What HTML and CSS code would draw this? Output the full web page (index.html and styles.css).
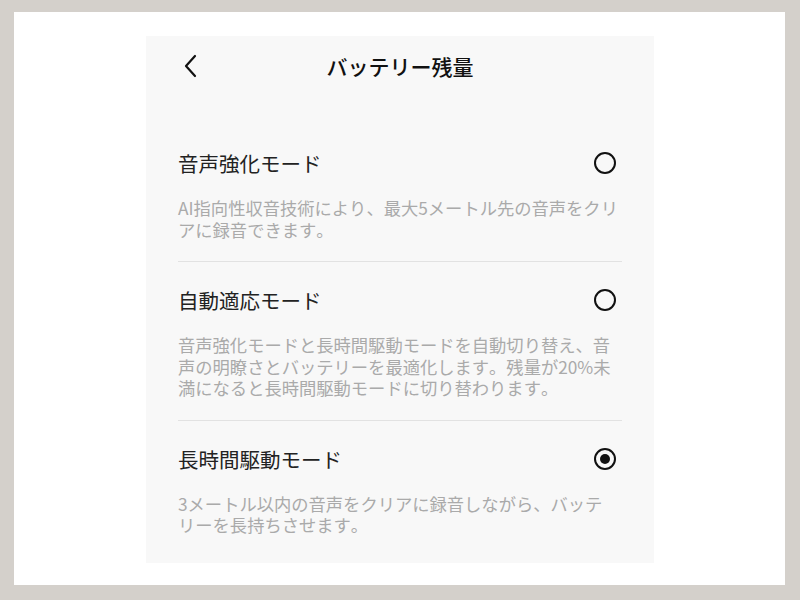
FILE: index.html
```html
<!DOCTYPE html>
<html lang="ja">
<head>
<meta charset="utf-8">
<link rel="stylesheet" href="styles.css">
</head>
<body>
<div class="frame">
  <div class="panel">
    <div class="header">
      <svg class="back" width="16" height="24" viewBox="0 0 16 24"><path d="M12 2 L3 12 L12 22" fill="none" stroke="#111" stroke-width="2.2" stroke-linecap="round" stroke-linejoin="round"/></svg>
      <div class="title">バッテリー残量</div>
    </div>
    <div class="list">
      <div class="item">
        <div class="row"><span class="name">音声強化モード</span><span class="radio"></span></div>
        <p class="desc">AI指向性収音技術により、最大5メートル先の音声をクリ<br>アに録音できます。</p>
      </div>
      <div class="item">
        <div class="row"><span class="name">自動適応モード</span><span class="radio"></span></div>
        <p class="desc">音声強化モードと長時間駆動モードを自動切り替え、音<br>声の明瞭さとバッテリーを最適化します。残量が20%未<br>満になると長時間駆動モードに切り替わります。</p>
      </div>
      <div class="item">
        <div class="row"><span class="name">長時間駆動モード</span><span class="radio on"></span></div>
        <p class="desc">3メートル以内の音声をクリアに録音しながら、バッテ<br>リーを長持ちさせます。</p>
      </div>
    </div>
  </div>
</div>
</body>
</html>
```

FILE: styles.css
```css
html, body {
  margin: 0;
  padding: 0;
  width: 800px;
  height: 600px;
  background: #d4d0cb;
  font-family: "Noto Sans CJK JP", "Noto Sans", sans-serif;
  font-kerning: none;
}
.frame {
  position: absolute;
  left: 14px;
  top: 12px;
  width: 771px;
  height: 573px;
  background: #ffffff;
  box-sizing: border-box;
  padding: 24px 0 0 132px;
}
.panel {
  width: 508px;
  height: 527px;
  background: #f8f8f8;
  box-sizing: border-box;
  padding: 0 32px;
}
.header {
  position: relative;
  height: 60px;
  display: flex;
  align-items: center;
  justify-content: center;
}
.back {
  position: absolute;
  left: 5px;
  top: 18px;
}
.title {
  font-size: 21px;
  font-weight: 500;
  color: #111;
}
.list {
  margin-top: 29px;
}
.item {
  padding: 24px 0 21px;
  border-bottom: 1px solid #e2e2e2;
}
.item:last-child {
  border-bottom: none;
}
.row {
  display: flex;
  align-items: center;
  justify-content: space-between;
  height: 28px;
}
.name {
  font-size: 20.5px;
  color: #222;
  line-height: 28px;
}
.radio {
  width: 18px;
  height: 18px;
  border: 2px solid #111;
  border-radius: 50%;
  margin-right: 6px;
  display: flex;
  align-items: center;
  justify-content: center;
}
.radio.on::after {
  content: "";
  width: 10px;
  height: 10px;
  border-radius: 50%;
  background: #111;
}
.desc {
  margin: 20px 0 0;
  font-size: 17.3px;
  line-height: 21.5px;
  color: #aaaaaa;
  white-space: nowrap;
}
```
